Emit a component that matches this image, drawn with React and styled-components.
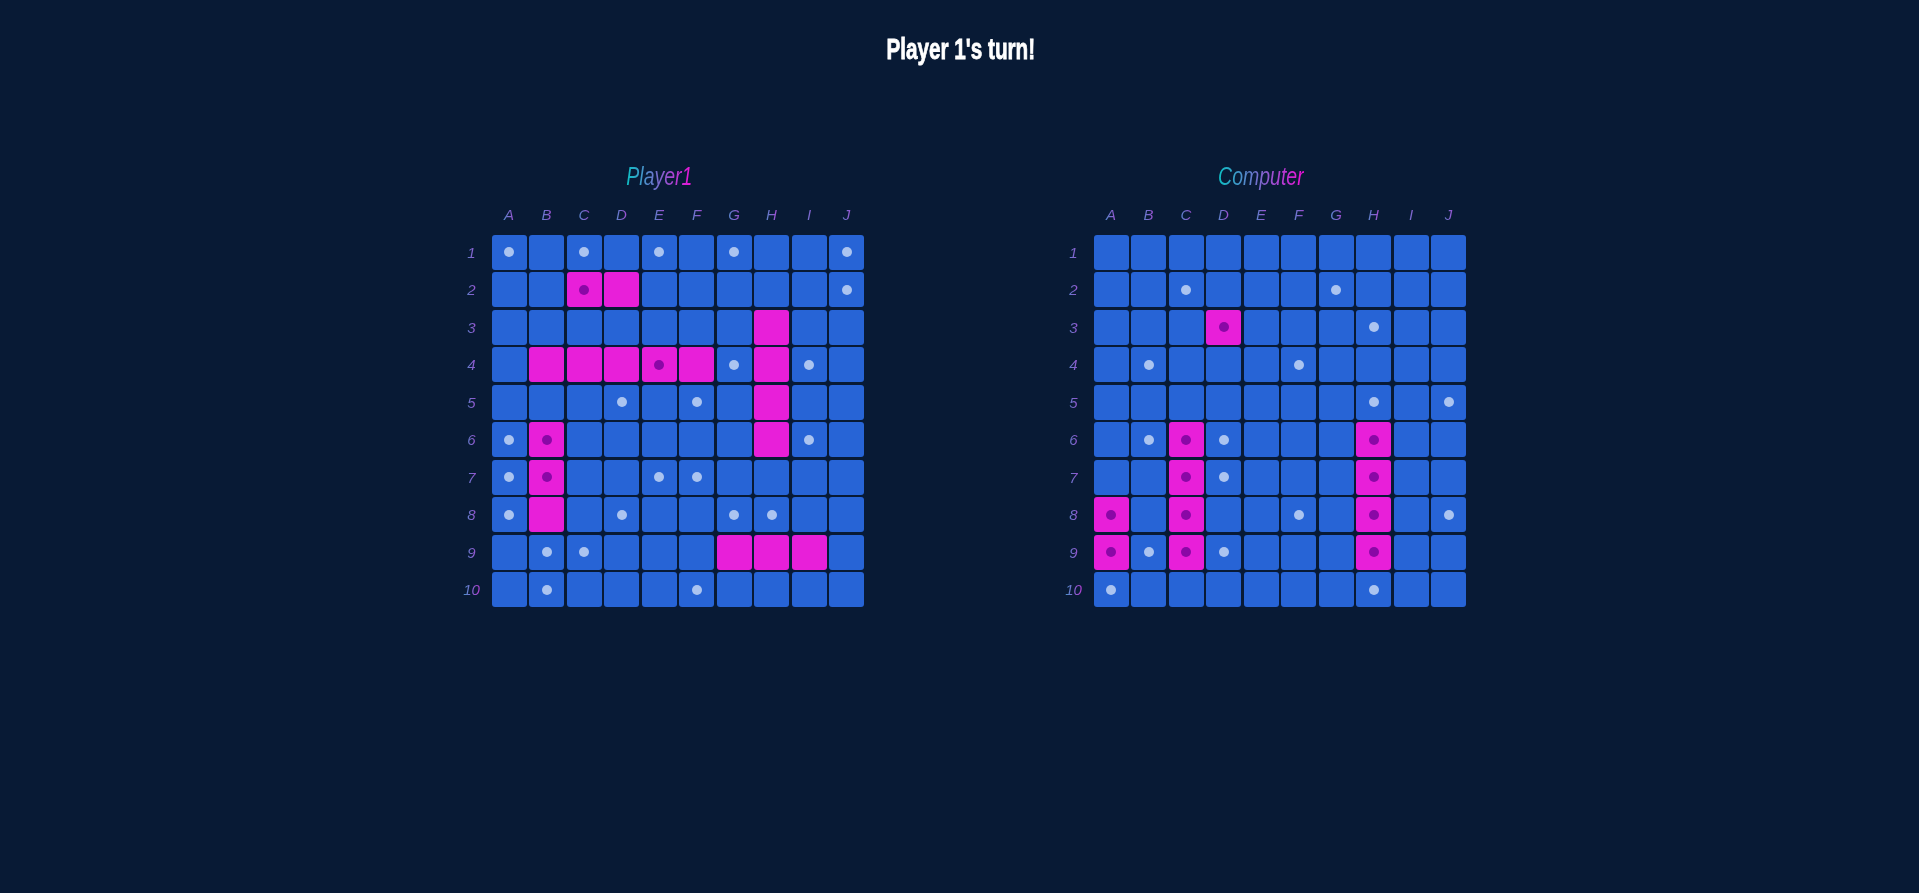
import styled, { createGlobalStyle } from 'styled-components';

const COLUMNS = ['A', 'B', 'C', 'D', 'E', 'F', 'G', 'H', 'I', 'J'];

// . water, o miss, s ship, x hit ship
const PLAYER_BOARD = [
  'o.o.o.o..o',
  '..xs.....o',
  '.......s..',
  '.sssxsoso.',
  '...o.o.s..',
  'ox.....so.',
  'ox..oo....',
  'os.o..oo..',
  '.oo...sss.',
  '.o...o....',
];

const COMPUTER_BOARD = [
  '..........',
  '..o...o...',
  '...x...o..',
  '.o...o....',
  '.......o.o',
  '.oxo...x..',
  '..xo...x..',
  'x.x..o.x.o',
  'xoxo...x..',
  'o......o..',
];

const GlobalStyle = createGlobalStyle`
  body {
    margin: 0;
    background-color: #081a35;
    font-family: 'Liberation Sans', sans-serif;
  }
`;

const Page = styled.div`
  min-height: 893px;
  display: flex;
  flex-direction: column;
  align-items: center;
`;

const Turn = styled.h1`
  margin: 32px 0 0 2px;
  height: 34px;
  line-height: 34px;
  font-family: 'Liberation Sans', sans-serif;
  font-size: 30px;
  font-weight: 700;
  color: #fff;
  -webkit-text-stroke: 0.8px #fff;
  transform: scaleX(0.69);
`;

const Boards = styled.main`
  margin-top: 94px;
  display: flex;
  gap: 192px;
  padding-left: 1px;
`;

const BoardWrap = styled.section`
  display: flex;
  flex-direction: column;
  align-items: center;
`;

const BoardName = styled.h2`
  margin: 0 0 5px;
  height: 32px;
  line-height: 32px;
  font-family: 'Liberation Sans', sans-serif;
  font-size: 25px;
  font-style: italic;
  font-weight: 400;
  background: linear-gradient(90deg, #0cc0c4, #ee0fd8);
  -webkit-background-clip: text;
  background-clip: text;
  color: transparent;
  transform: scaleX(0.78);
`;

const Grid = styled.div`
  display: grid;
  grid-template-columns: repeat(11, 35px);
  grid-auto-rows: 35px;
  gap: 2.5px;
`;

const Label = styled.div`
  display: flex;
  align-items: center;
  justify-content: center;
  font-family: 'Liberation Sans', sans-serif;
  font-size: 15px;
  font-style: italic;
  background: linear-gradient(90deg, #0cc0c4, #ee0fd8);
  -webkit-background-clip: text;
  background-clip: text;
  color: transparent;
`;

const Cell = styled.button`
  display: flex;
  align-items: center;
  justify-content: center;
  padding: 0;
  border: 0;
  border-radius: 3px;
  background-color: ${(props) => (props.$ship ? '#e81fd9' : '#2764d6')};
`;

const Dot = styled.span`
  width: 10px;
  height: 10px;
  border-radius: 50%;
  background-color: ${(props) => (props.$hit ? '#8a08a6' : '#abc4f0')};
`;

function Board({ name, rows }) {
  return (
    <BoardWrap>
      <BoardName>{name}</BoardName>
      <Grid>
        <Label />
        {COLUMNS.map((col) => (
          <Label key={col}>{col}</Label>
        ))}
        {rows.map((row, r) => [
          <Label key={`label-${r}`}>{r + 1}</Label>,
          ...row.split('').map((mark, c) => (
            <Cell key={`${r}-${c}`} $ship={mark === 's' || mark === 'x'}>
              {mark === 'o' && <Dot />}
              {mark === 'x' && <Dot $hit />}
            </Cell>
          )),
        ])}
      </Grid>
    </BoardWrap>
  );
}

export default function App() {
  return (
    <Page>
      <GlobalStyle />
      <Turn>Player 1's turn!</Turn>
      <Boards>
        <Board name="Player1" rows={PLAYER_BOARD} />
        <Board name="Computer" rows={COMPUTER_BOARD} />
      </Boards>
    </Page>
  );
}
